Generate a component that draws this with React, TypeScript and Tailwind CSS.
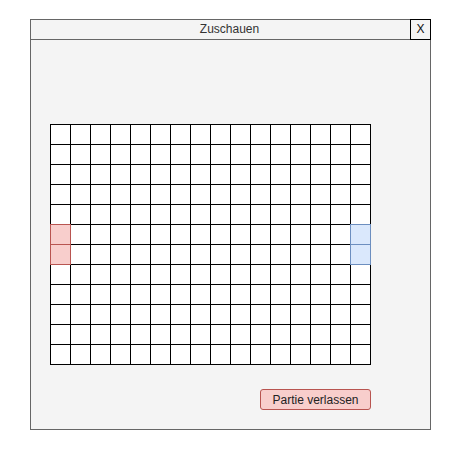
import * as React from 'react'

const COLS = 16
const ROWS = 12

// farbige Felder: Spieler links (rot) und rechts (blau)
function cellColor(r: number, c: number): 'red' | 'blue' | null {
  if (c === 0 && (r === 5 || r === 6)) return 'red'
  if (c === COLS - 1 && (r === 5 || r === 6)) return 'blue'
  return null
}

function Cell({ r, c }: { r: number; c: number }) {
  const color = cellColor(r, c)
  return (
    <div className="relative w-[20px] h-[20px] border-r border-b border-black bg-white">
      {color === 'red' && (
        <div className="absolute -left-px -top-px w-[21px] h-[21px] border border-[#b85450] bg-[#f8cecc]" />
      )}
      {color === 'blue' && (
        <div className="absolute -left-px -top-px w-[21px] h-[21px] border border-[#6c8ebf] bg-[#dae8fc]" />
      )}
    </div>
  )
}

export default function App() {
  return (
    <div
      className="w-[461px] h-[457px] bg-white pt-[19px] pl-[30px]"
      style={{ fontFamily: '"Liberation Sans", Arial, sans-serif' }}
    >
      <div className="w-[401px] h-[411px] border border-[#666666] bg-[#f4f4f4] flex flex-col">
        {/* Titelleiste */}
        <div className="h-[20px] border-b border-[#666666] flex items-center relative">
          <div className="flex-1 text-center text-[12px] leading-[19px] text-[#333333] pl-[18px]">Zuschauen</div>
          <div className="w-[21px] h-[21px] -mt-px -mr-px border border-black flex items-center justify-center text-[12px] text-[#111111]">
            X
          </div>
        </div>

        {/* Spielfeld */}
        <div className="pl-[19px] pt-[84px]">
          <div className="w-[321px]">
            <div className="grid grid-cols-[repeat(16,20px)] border-l border-t border-black w-[321px]">
              {Array.from({ length: ROWS }).map((_, r) =>
                Array.from({ length: COLS }).map((_, c) => <Cell key={`${r}-${c}`} r={r} c={c} />)
              )}
            </div>
            <div className="flex justify-end mt-[24px]">
              <button className="w-[111px] h-[21px] rounded-[3px] border border-[#b85450] bg-[#f8cecc] text-[12px] text-[#222222] flex items-center justify-center">
                Partie verlassen
              </button>
            </div>
          </div>
        </div>
      </div>
    </div>
  )
}
